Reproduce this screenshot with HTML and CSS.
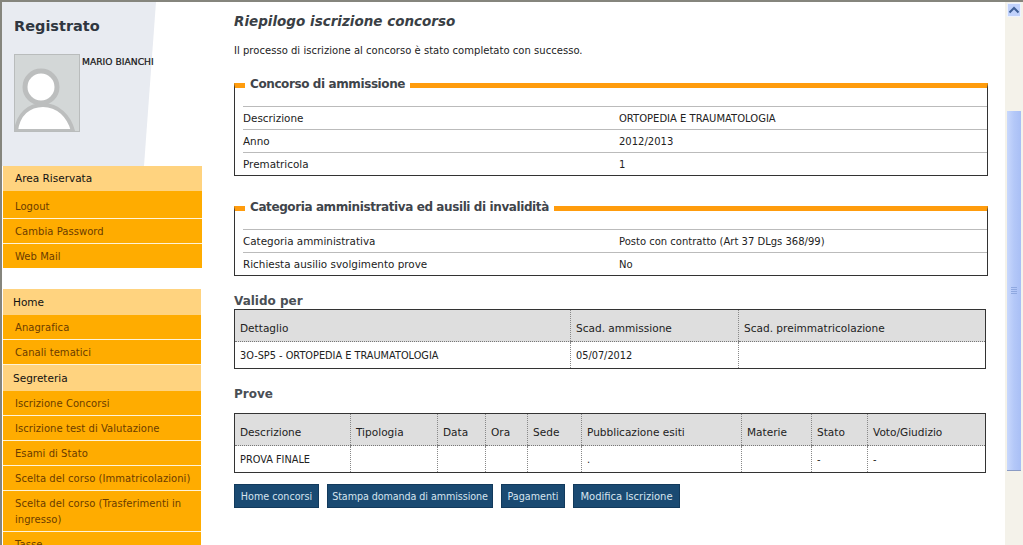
FILE: index.html
```html
<!DOCTYPE html>
<html lang="it">
  <head>
    <meta charset="UTF-8" />
    <meta name="viewport" content="width=device-width, initial-scale=1.0" />
    <title>Riepilogo iscrizione concorso</title>
    <link rel="stylesheet" href="styles.css">
  </head>
  <body>
    <div class="sidebar">
      <div class="profile">
        <h2>Registrato</h2>
        <div class="user">
          <svg class="avatar" width="66" height="78" viewBox="0 0 66 78">
            <rect x="0.5" y="0.5" width="65" height="77" fill="#d3d7d7" stroke="#b9bcbc" />
            <circle cx="27" cy="33" r="16" fill="#fff" stroke="#bcbebe" stroke-width="5" />
            <path d="M2 77 C4 60 15 51 29 51 C44 51 55 62 59 77 Z" fill="#fff" stroke="#bcbebe" stroke-width="4" />
            <rect x="0.5" y="0.5" width="65" height="77" fill="none" stroke="#b9bcbc" />
          </svg>
          <span class="username">MARIO BIANCHI</span>
        </div>
      </div>

      <div class="menu menu-top">
        <div class="menu-head">Area Riservata</div>
        <a href="#">Logout</a>
        <a href="#">Cambia Password</a>
        <a href="#">Web Mail</a>
      </div>

      <div class="menu menu-main">
        <div class="menu-head">Home</div>
        <a href="#">Anagrafica</a>
        <a href="#">Canali tematici</a>
        <div class="menu-head">Segreteria</div>
        <a href="#">Iscrizione Concorsi</a>
        <a href="#">Iscrizione test di Valutazione</a>
        <a href="#">Esami di Stato</a>
        <a href="#">Scelta del corso (Immatricolazioni)</a>
        <a href="#">Scelta del corso (Trasferimenti in ingresso)</a>
        <a href="#">Tasse</a>
      </div>
    </div>

    <div class="content">
      <h1>Riepilogo iscrizione concorso</h1>
      <p class="intro">Il processo di iscrizione al concorso è stato completato con successo.</p>

      <fieldset class="box">
        <legend>Concorso di ammissione</legend>
        <div class="row"><span>Descrizione</span><span>ORTOPEDIA E TRAUMATOLOGIA</span></div>
        <div class="row"><span>Anno</span><span>2012/2013</span></div>
        <div class="row"><span>Prematricola</span><span>1</span></div>
      </fieldset>

      <fieldset class="box">
        <legend>Categoria amministrativa ed ausili di invalidità</legend>
        <div class="row"><span>Categoria amministrativa</span><span>Posto con contratto (Art 37 DLgs 368/99)</span></div>
        <div class="row"><span>Richiesta ausilio svolgimento prove</span><span>No</span></div>
      </fieldset>

      <h3 class="valid-title">Valido per</h3>
      <table class="grid">
        <colgroup><col class="c1"><col class="c2"><col></colgroup>
        <thead>
          <tr><th>Dettaglio</th><th>Scad. ammissione</th><th>Scad. preimmatricolazione</th></tr>
        </thead>
        <tbody>
          <tr><td>3O-SP5 - ORTOPEDIA E TRAUMATOLOGIA</td><td>05/07/2012</td><td></td></tr>
        </tbody>
      </table>

      <h3 class="prove-title">Prove</h3>
      <table class="grid">
        <colgroup>
          <col class="p1"><col class="p2"><col class="p3"><col class="p4"><col class="p5">
          <col class="p6"><col class="p7"><col class="p8"><col>
        </colgroup>
        <thead>
          <tr>
            <th>Descrizione</th><th>Tipologia</th><th>Data</th><th>Ora</th><th>Sede</th>
            <th>Pubblicazione esiti</th><th>Materie</th><th>Stato</th><th>Voto/Giudizio</th>
          </tr>
        </thead>
        <tbody>
          <tr>
            <td>PROVA FINALE</td><td></td><td></td><td></td><td></td>
            <td>.</td><td></td><td>-</td><td>-</td>
          </tr>
        </tbody>
      </table>

      <div class="actions">
        <button class="btn-home">Home concorsi</button>
        <button class="btn-print">Stampa domanda di ammissione</button>
        <button class="btn-pay">Pagamenti</button>
        <button class="btn-edit">Modifica Iscrizione</button>
      </div>
    </div>

    <div class="scrollbar">
      <div class="scroll-up">
        <svg width="12" height="8" viewBox="0 0 12 8"><path d="M1.5 6.5 L6 2 L10.5 6.5" fill="none" stroke="#3f5f96" stroke-width="2" /></svg>
      </div>
      <div class="scroll-thumb"><span></span><span></span><span></span><span></span></div>
    </div>
  </body>
</html>
```

FILE: styles.css
```css
html, body {
  height: 100%;
}
body {
  margin: 0;
  height: 545px;
  overflow: hidden;
  display: flex;
  font-family: "DejaVu Sans", Verdana, sans-serif;
  font-size: 10px;
  color: #222;
  background-color: white;
  border-top: 2px solid #85857d;
  border-left: 2px solid #85857d;
  box-sizing: border-box;
}

/* colonna sinistra */
.sidebar {
  width: 200px;
  flex: none;
  height: 543px;
  overflow: hidden;
}
.profile {
  position: relative;
  z-index: 0;
  height: 164px;
  box-sizing: border-box;
  padding: 15px 0 0 12px;
}
/* sfondo con il bordo inclinato */
.profile::before {
  content: "";
  position: absolute;
  z-index: -1;
  inset: 0;
  background-color: #e8ebf1;
  clip-path: polygon(0 0, 154px 0, 142px 100%, 0 100%);
}
.profile h2 {
  margin: 0 0 19px;
  font-size: 14.5px;
  line-height: 18px;
  font-weight: bold;
  color: #2f3640;
}
.user {
  display: flex;
  align-items: flex-start;
}
.avatar {
  display: block;
  flex: none;
}
.username {
  font-size: 9.2px;
  line-height: 14px;
  margin: 1px 0 0 2px;
  color: #111;
  white-space: nowrap;
  -webkit-text-stroke: 0.2px #111;
}
.menu {
  background-color: #ffac00;
  margin-left: 1px;
}
.menu-top {
  width: 199px;
  margin-bottom: 21px;
}
.menu-main {
  width: 198px;
}
.menu-head {
  height: 26px;
  line-height: 27px;
  background-color: #ffd37f;
  color: #111;
  font-size: 10.5px;
  padding-left: 10px;
}
.menu-top .menu-head {
  height: 25px;
  line-height: 24px;
  padding-left: 12px;
}
.menu a {
  display: block;
  padding: 5px 6px 3px 12px;
  line-height: 16px;
  font-size: 10px;
  letter-spacing: 0.05px;
  color: #6b3c00;
  text-decoration: none;
  border-bottom: 1px solid #fff3d8;
}
.menu a:last-child {
  border-bottom: none;
}
.menu-top a:first-of-type {
  padding-top: 8px;
}

/* contenuto */
.content {
  width: 754px;
  flex: none;
  margin-left: 32px;
  box-sizing: border-box;
}
h1 {
  margin: 9px 0 0;
  font-size: 13.5px;
  line-height: 20px;
  font-style: italic;
  font-weight: bold;
  color: #3a3f45;
}
.intro {
  margin: 11px 0 0;
  font-size: 10px;
  letter-spacing: 0.03px;
  line-height: 18px;
  color: #222;
}
.box {
  margin: 0;
  padding: 0 0 0 8px;
  border: 1px solid #333;
  border-top: 5px solid #ff9c0d;
  min-width: 0;
}
.box:nth-of-type(1) {
  margin-top: 16px;
}
.box + .box {
  margin-top: 23px;
}
legend {
  margin-left: 2px;
  padding: 0 5px 2px;
  font-size: 12px;
  letter-spacing: -0.4px;
  line-height: 17px;
  font-weight: bold;
  color: #3f454b;
}
.box legend + .row {
  margin-top: 11px;
}
.row {
  display: flex;
  border-top: 1px solid #bbb;
  height: 22px;
  line-height: 23px;
  font-size: 10.4px;
}
.row span:first-child {
  width: 376px;
  flex: none;
}
.row span:last-child {
  font-size: 10px;
}
h3 {
  margin: 0;
  font-size: 12px;
  line-height: 16px;
  font-weight: bold;
  color: #4a4f55;
}
.valid-title {
  margin-top: 17px;
}
.prove-title {
  margin-top: 17px;
  margin-bottom: 11px;
}
.grid {
  width: 752px;
  border-collapse: collapse;
  table-layout: fixed;
  border: 1px solid #333;
}
.grid th {
  height: 32px;
  padding: 4px 0 0 5px;
  box-sizing: border-box;
  background-color: #dedede;
  text-align: left;
  font-size: 10.55px;
  font-weight: normal;
  color: #222;
  border-bottom: 1px dotted #777;
  border-left: 1px dotted #888;
}
.grid td {
  height: 27px;
  padding: 0 0 0 5px;
  box-sizing: border-box;
  font-size: 9.75px;
  color: #222;
  border-left: 1px dotted #888;
}
.c1 { width: 336px; }
.c2 { width: 168px; }
.p1 { width: 116px; }
.p2 { width: 87px; }
.p3 { width: 48px; }
.p4 { width: 42px; }
.p5 { width: 54px; }
.p6 { width: 160px; }
.p7 { width: 70px; }
.p8 { width: 56px; }
.actions {
  display: flex;
  gap: 8px;
  margin-top: 11px;
}
button {
  height: 24px;
  padding: 0;
  background-color: #1a4a72;
  color: #d6e4ef;
  border: 1px solid #123a5c;
  font-family: inherit;
  font-size: 9.6px;
}
.btn-home { width: 85px; }
.btn-print { width: 166px; letter-spacing: -0.08px; }
.btn-pay { width: 64px; }
.btn-edit { width: 107px; font-size: 10px; }

/* barra di scorrimento */
.scrollbar {
  width: 18px;
  height: 543px;
  margin-left: 17px;
  flex: none;
  background-color: #f4f2ea;
  box-sizing: border-box;
  padding: 1px 2px 0 2px;
}
.scroll-up {
  height: 14px;
  box-sizing: border-box;
  background-color: #c1d2fb;
  border: 1px solid #eef3fe;
  display: flex;
  align-items: center;
  justify-content: center;
}
.scroll-thumb {
  height: 360px;
  margin-top: 94px;
  background: linear-gradient(90deg, #c9d8fc, #b4c8f8 50%, #a9bff5);
  border-bottom: 1px solid #8a9bc4;
  box-sizing: border-box;
  display: flex;
  flex-direction: column;
  align-items: center;
  justify-content: center;
  gap: 1px;
}
.scroll-thumb span {
  width: 6px;
  height: 1px;
  background-color: #8fa8e0;
}
```
